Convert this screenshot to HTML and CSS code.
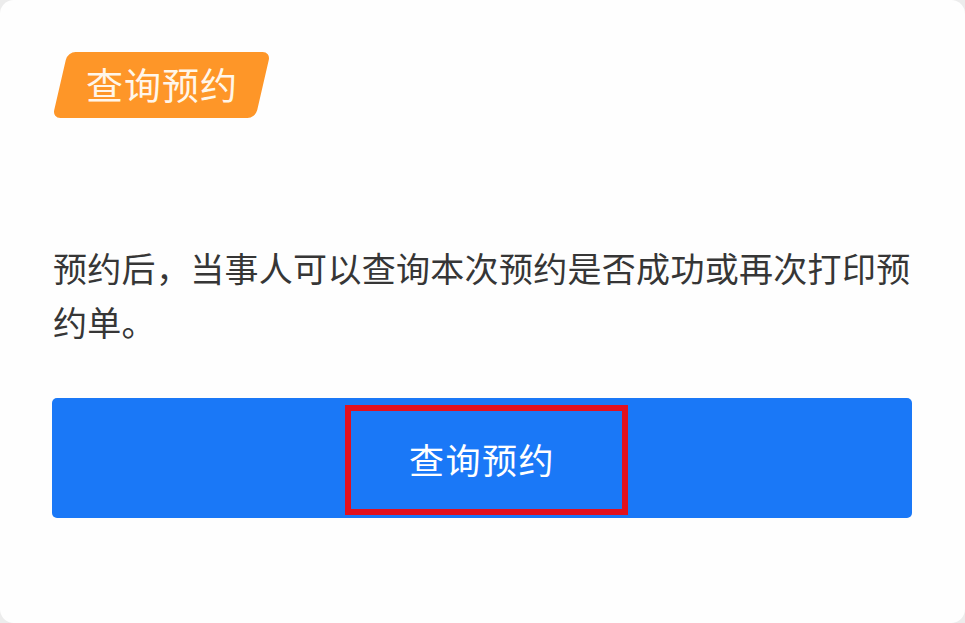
FILE: index.html
```html
<!DOCTYPE html>
<html lang="zh-CN">
<head>
  <meta charset="UTF-8" />
  <meta name="viewport" content="width=device-width, initial-scale=1.0"/>
  <title>查询预约</title>
  <link rel="stylesheet" href="styles.css">
</head>
<body>

<div class="card">
  <div class="tag"><span>查询预约</span></div>

  <p class="desc">预约后，当事人可以查询本次预约是否成功或再次打印预约单。</p>

  <button class="query-btn">
    查询预约
    <span class="mark"></span>
  </button>
</div>

</body>
</html>
```

FILE: styles.css
```css
body {
  margin: 0;
  padding: 0;
  background: #ececec;
  font-family: "Noto Sans CJK SC", "Noto Sans", sans-serif;
}

.card {
  box-sizing: border-box;
  height: 623px;
  background: #fefefe;
  border-radius: 14px;
  padding: 52px 53px 0 52px;
}

.tag {
  display: inline-flex;
  align-items: center;
  justify-content: center;
  width: 203px;
  height: 66px;
  margin-left: 8px;
  background: #fe9628;
  border-radius: 8px;
  transform: skewX(-13deg);
}

.tag span {
  transform: skewX(13deg);
  color: #fff6ea;
  font-size: 37px;
  letter-spacing: 1px;
  line-height: 1;
  margin-top: -2px;
}

.desc {
  margin: 123px 0 0 1px;
  font-size: 34px;
  letter-spacing: 0.3px;
  line-height: 54px;
  color: #363636;
}

.query-btn {
  position: relative;
  display: flex;
  align-items: center;
  justify-content: center;
  width: 860px;
  height: 120px;
  margin-top: 49px;
  border: none;
  border-radius: 5px;
  background: #1a78f7;
  color: #ffffff;
  font-family: inherit;
  font-size: 35px;
  letter-spacing: 1.5px;
  padding: 0 0 0 0;
}

.query-btn .mark {
  position: absolute;
  left: 293px;
  top: 7px;
  width: 283px;
  height: 110px;
  box-sizing: border-box;
  border: 6px solid #e2101e;
}
```
